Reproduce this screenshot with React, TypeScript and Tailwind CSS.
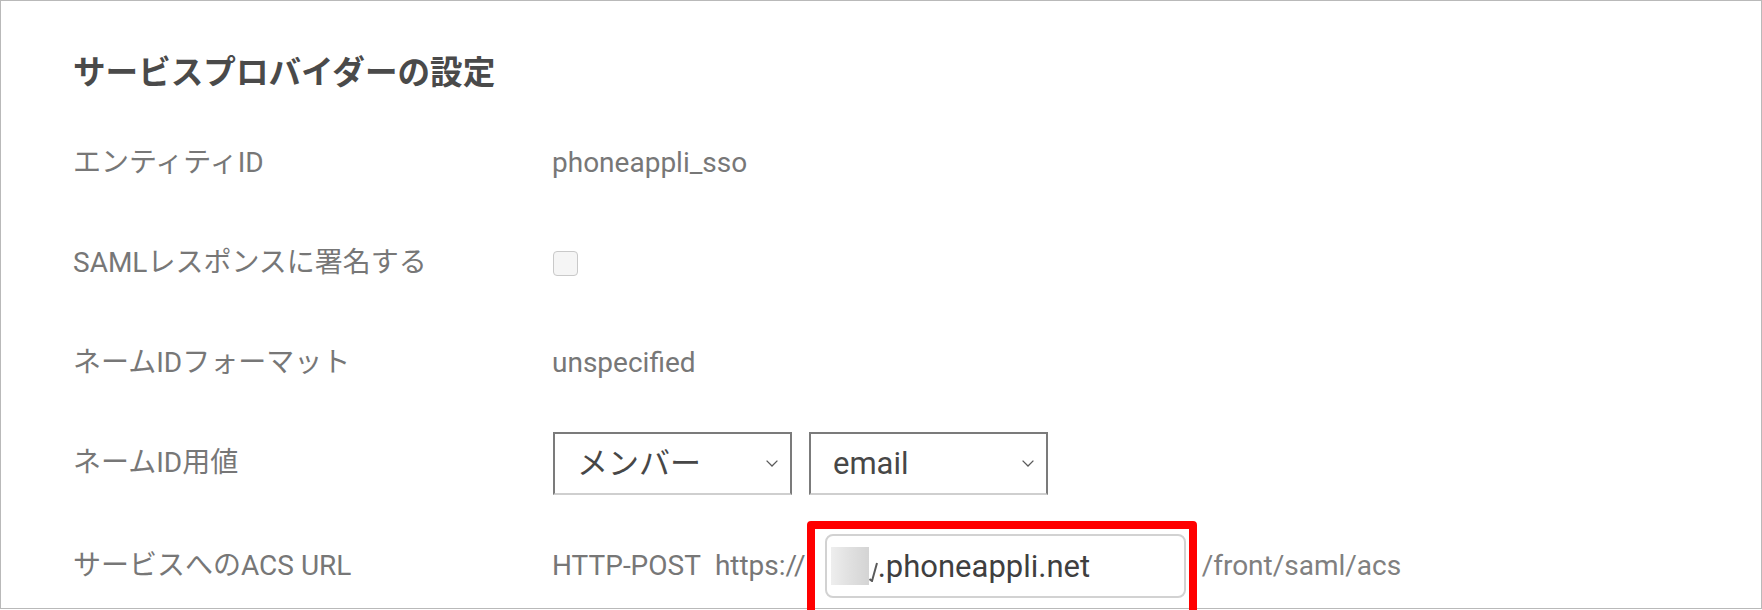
const font = "font-['Roboto','Noto_Sans_CJK_JP',sans-serif]";

const Chevron = () => (
    <svg width="12" height="7" viewBox="0 0 12 7" className="shrink-0">
        <polyline points="0.6,0.6 6,6 11.4,0.6" fill="none" stroke="#5a5a5a" strokeWidth="1.3" />
    </svg>
);

const FakeSelect = ({ value }: { value: string }) => (
    <div className="flex h-[63px] w-[239px] items-center justify-between border-2 border-[#7b7b7b] border-b-[#cfcfcf] bg-white pl-[22px] pr-[12px]">
        <span className="text-[31px] leading-none text-[#474747]">{value}</span>
        <Chevron />
    </div>
);

const Row = ({ label, children, className = "" }: { label: string; children: React.ReactNode; className?: string }) => (
    <div className={`flex h-[100px] items-center ${className}`}>
        <div className="w-[479px] shrink-0 text-[28px] leading-none text-[#777777]">{label}</div>
        <div className="flex items-center">{children}</div>
    </div>
);

export default function App() {
    return (
        <div className={`h-[610px] w-[1762px] overflow-hidden bg-white ${font}`}>
            <div className="h-[609px] w-[1762px] border border-[#b9b9b9] pl-[72px] pt-[52px]">
                {/* TITLE */}
                <h1 className="mb-[20px] h-[40px] text-[32.6px] font-bold leading-[40px] text-[#4a4a4a]">
                    サービスプロバイダーの設定
                </h1>

                {/* ENTITY ID */}
                <Row label="エンティティID">
                    <span className="text-[28px] leading-none text-[#777777]">phoneappli_sso</span>
                </Row>

                {/* SIGN */}
                <Row label="SAMLレスポンスに署名する">
                    <div className="ml-[1px] h-[25px] w-[25px] rounded-[4px] border-[1.5px] border-[#c9c9c9] bg-[#f5f5f5]" />
                </Row>

                {/* NAME ID FORMAT */}
                <Row label="ネームIDフォーマット">
                    <span className="text-[28px] leading-none text-[#777777]">unspecified</span>
                </Row>

                {/* NAME ID VALUE */}
                <Row label="ネームID用値">
                    <div className="ml-[1px] flex gap-[17px]">
                        <FakeSelect value="メンバー" />
                        <FakeSelect value="email" />
                    </div>
                </Row>

                {/* ACS URL */}
                <Row label="サービスへのACS URL" className="pt-[6px]">
                    <span className="text-[28px] leading-none text-[#777777]">HTTP-POST</span>
                    <span className="ml-[14px] text-[28px] leading-none text-[#777777]">https://</span>
                    <div className="relative ml-[19px]">
                        <div className="flex h-[64px] w-[361px] items-center rounded-[8px] border-2 border-[#d2d2d2] bg-white pl-[4px]">
                            <span className="h-[38px] w-[38px] bg-gradient-to-r from-[#eeeeee] via-[#e0e0e0] to-[#d4d4d4] blur-[0.5px]" />
                            <svg width="9" height="24" viewBox="0 0 9 24" className="mt-[8px] shrink-0">
                                <path d="M0.5 21 L3 23 L8 5" fill="none" stroke="#5a5a5a" strokeWidth="2" />
                            </svg>
                            <span className="text-[31px] leading-none text-[#3f3f3f]">.phoneappli.net</span>
                        </div>
                        <div className="absolute -left-[18px] -right-[11px] -top-[13px] h-[100px] rounded-[4px] border-[8px] border-[#ff0000]" />
                    </div>
                    <span className="ml-[16px] text-[28px] leading-none text-[#808080]">/front/saml/acs</span>
                </Row>
            </div>
        </div>
    );
}
